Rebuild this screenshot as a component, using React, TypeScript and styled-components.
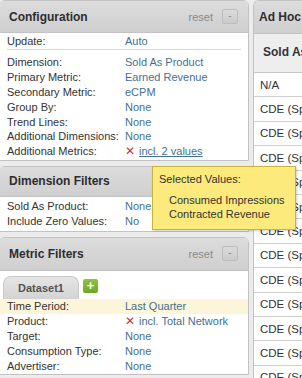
import React from "react";
import styled, { createGlobalStyle } from "styled-components";

const Global = createGlobalStyle`
  html, body {
    margin: 0;
    padding: 0;
    background: #ececec;
    font-family: "Liberation Sans", Arial, sans-serif;
    color: #333;
    overflow: hidden;
  }
`;

const Page = styled.div`
  display: flex;
  gap: 4px;
  width: 302px;
  height: 378px;
  overflow: hidden;
  position: relative;
`;

const LeftColumn = styled.div`
  width: 250px;
  margin-left: -1px;
  display: flex;
  flex-direction: column;
  flex-shrink: 0;
`;

const Panel = styled.section<{ $gap?: number }>`
  margin-top: ${(p) => p.$gap ?? 0}px;
  border: 1px solid #c2c2c2;
  border-radius: 6px 6px 0 0;
  background: #fff;
  overflow: hidden;
`;

const PanelHeader = styled.header<{ $h: number; $padLeft?: number }>`
  display: flex;
  align-items: center;
  height: ${(p) => p.$h}px;
  padding: 0 10px 0 ${(p) => p.$padLeft ?? 9}px;
  background: linear-gradient(#dcdcdc, #cfcfcf);
  border-bottom: 1px solid #c2c2c2;
`;

const PanelTitle = styled.h2`
  flex: 1;
  margin: 0;
  font-size: 12px;
  font-weight: bold;
  color: #2e2e2e;
  white-space: nowrap;
`;

const Reset = styled.span`
  font-size: 11px;
  color: #8a8a8a;
  margin-right: 9px;
`;

const Collapse = styled.span`
  width: 14px;
  height: 13px;
  border: 1px solid #bdbdbd;
  border-radius: 2px;
  background: linear-gradient(#dadada, #cbcbcb);
  color: #888;
  font-size: 10px;
  line-height: 12px;
  text-align: center;
`;

const Body = styled.div<{ $pad: string }>`
  padding: ${(p) => p.$pad};
`;

const Row = styled.div<{ $highlight?: boolean; $h?: number }>`
  display: grid;
  grid-template-columns: 118px 1fr;
  height: ${(p) => p.$h ?? 15}px;
  align-items: center;
  padding: 0 7px;
  font-size: 11px;
  background: ${(p) => (p.$highlight ? "#fdf5da" : "transparent")};
`;

const Label = styled.span`
  color: #333;
  white-space: nowrap;
`;

const Value = styled.span`
  color: #45708f;
  white-space: nowrap;
  display: flex;
  align-items: center;
  gap: 4px;
`;

const Remove = styled.span`
  color: #c8352b;
  font-size: 12px;
  line-height: 1;
`;

const Linked = styled.span`
  text-decoration: underline;
`;

const Divider = styled.hr`
  border: 0;
  border-top: 1px solid #d8d8d8;
  margin: 1px 7px 5px;
`;

const TabBar = styled.div`
  display: flex;
  align-items: flex-start;
  gap: 4px;
  padding: 5px 0 0 3px;
`;

const Tab = styled.div`
  width: 74px;
  height: 22px;
  border-radius: 8px 8px 0 0;
  border: 1px solid #c9c9c9;
  border-bottom: 0;
  background: linear-gradient(#e6e6e6, #d3d3d3);
  color: #555;
  font-size: 11px;
  font-weight: bold;
  display: flex;
  align-items: center;
  justify-content: center;
`;

const AddButton = styled.div`
  width: 15px;
  height: 14px;
  margin-top: 3px;
  border-radius: 2px;
  background: linear-gradient(#8fc440, #6fa52a);
  color: #fff;
  font-size: 13px;
  font-weight: bold;
  line-height: 14px;
  text-align: center;
`;

const RightColumn = styled.div`
  flex: 1;
  min-width: 100px;
`;

const AdHoc = styled(Panel)`
  border-right: 0;
  border-radius: 6px 0 0 0;
  height: 400px;
`;

const Table = styled.div`
  display: flex;
  flex-direction: column;
`;

const HeadCell = styled.div`
  height: 39px;
  box-sizing: border-box;
  padding: 11px 0 0 9px;
  background: #eeeeee;
  border-bottom: 1px solid #c8c8c8;
  font-size: 12px;
  font-weight: bold;
  white-space: nowrap;
`;

const Cell = styled.div`
  height: 24.4px;
  box-sizing: border-box;
  display: flex;
  align-items: center;
  padding-left: 6px;
  border-bottom: 1px solid #cfcfcf;
  font-size: 11.5px;
  white-space: nowrap;
`;

const Tooltip = styled.div`
  position: absolute;
  left: 152px;
  top: 166px;
  width: 136px;
  height: 57px;
  padding: 5px 0 0 6px;
  background: #fcea7c;
  border: 1px solid #c9b43c;
  box-shadow: 1px 1px 2px rgba(0, 0, 0, 0.2);
  font-size: 11px;
  color: #333;
  line-height: 14px;
`;

const TooltipList = styled.div`
  margin: 7px 0 0 10px;
`;

const config: [string, React.ReactNode][] = [
  ["Dimension:", "Sold As Product"],
  ["Primary Metric:", "Earned Revenue"],
  ["Secondary Metric:", "eCPM"],
  ["Group By:", "None"],
  ["Trend Lines:", "None"],
  ["Additional Dimensions:", "None"],
  [
    "Additional Metrics:",
    <>
      <Remove>✕</Remove>
      <Linked>incl. 2 values</Linked>
    </>,
  ],
];

const metrics: [string, React.ReactNode][] = [
  [
    "Product:",
    <>
      <Remove>✕</Remove>
      <span>incl. Total Network</span>
    </>,
  ],
  ["Target:", "None"],
  ["Consumption Type:", "None"],
  ["Advertiser:", "None"],
];

const adHocRows = ["N/A", ...Array(13).fill("CDE (Sp")];

export default function App() {
  return (
    <>
      <Global />
      <Page>
        <LeftColumn>
          <Panel>
            <PanelHeader $h={31}>
              <PanelTitle>Configuration</PanelTitle>
              <Reset>reset</Reset>
              <Collapse>-</Collapse>
            </PanelHeader>
            <Body $pad="0 0 1px">
              <Row>
                <Label>Update:</Label>
                <Value>Auto</Value>
              </Row>
              <Divider />
              {config.map(([label, value]) => (
                <Row key={label} $h={14.8}>
                  <Label>{label}</Label>
                  <Value>{value}</Value>
                </Row>
              ))}
            </Body>
          </Panel>

          <Panel $gap={5}>
            <PanelHeader $h={29}>
              <PanelTitle>Dimension Filters</PanelTitle>
            </PanelHeader>
            <Body $pad="2px 0 2px">
              <Row>
                <Label>Sold As Product:</Label>
                <Value>None</Value>
              </Row>
              <Row>
                <Label>Include Zero Values:</Label>
                <Value>No</Value>
              </Row>
            </Body>
          </Panel>

          <Panel $gap={5}>
            <PanelHeader $h={32}>
              <PanelTitle>Metric Filters</PanelTitle>
              <Reset>reset</Reset>
              <Collapse>-</Collapse>
            </PanelHeader>
            <TabBar>
              <Tab>Dataset1</Tab>
              <AddButton>+</AddButton>
            </TabBar>
            <Row $highlight>
              <Label>Time Period:</Label>
              <Value>Last Quarter</Value>
            </Row>
            {metrics.map(([label, value]) => (
              <Row key={label}>
                <Label>{label}</Label>
                <Value>{value}</Value>
              </Row>
            ))}
          </Panel>
        </LeftColumn>

        <RightColumn>
          <AdHoc>
            <PanelHeader $h={32} $padLeft={5}>
              <PanelTitle>Ad Hoc</PanelTitle>
            </PanelHeader>
            <Table>
              <HeadCell>Sold As</HeadCell>
              {adHocRows.map((r, i) => (
                <Cell key={i}>{r}</Cell>
              ))}
            </Table>
          </AdHoc>
        </RightColumn>

        <Tooltip>
          Selected Values:
          <TooltipList>
            Consumed Impressions
            <br />
            Contracted Revenue
          </TooltipList>
        </Tooltip>
      </Page>
    </>
  );
}
